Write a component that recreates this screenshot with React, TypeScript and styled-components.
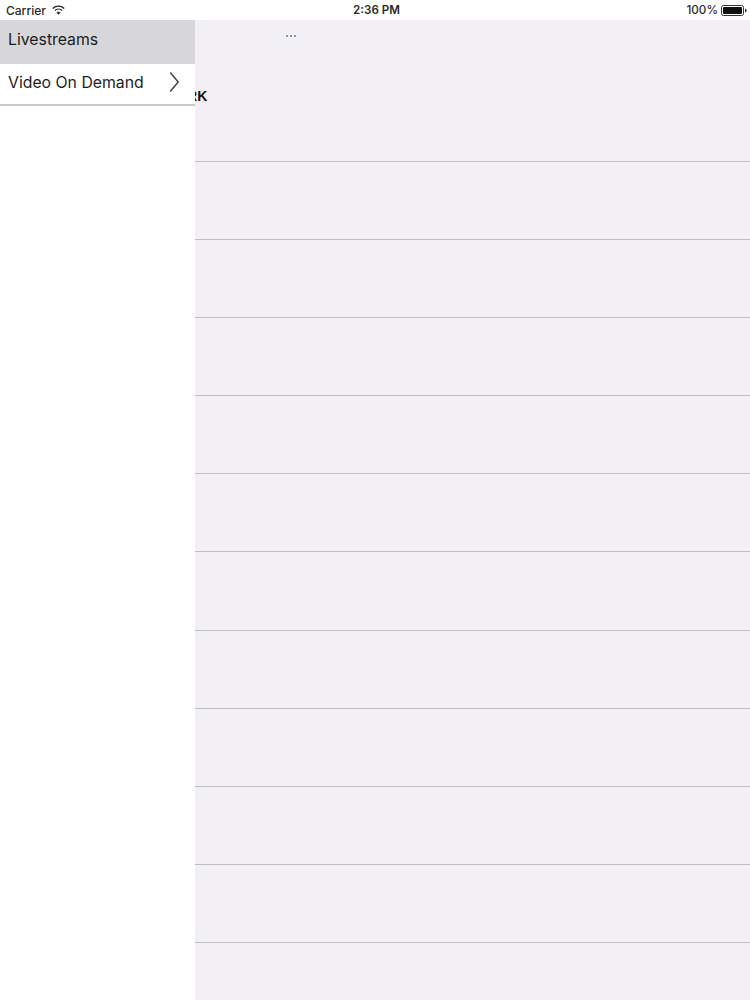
import React from "react";
import styled, { createGlobalStyle } from "styled-components";

const Global = createGlobalStyle`
  html, body { margin: 0; padding: 0; background: #fff; }
  body { font-family: "Liberation Sans", Arial, sans-serif; }
`;

const Screen = styled.div`
  position: relative;
  width: 750px;
  height: 1000px;
  overflow: hidden;
  background: #fff;
  display: flex;
  flex-direction: column;
`;

const StatusBar = styled.div`
  height: 20px;
  flex: none;
  display: grid;
  grid-template-columns: 1fr auto 1fr;
  align-items: center;
  padding: 0 3px 0 6px;
  font-family: "Inter", "Liberation Sans", sans-serif;
  font-size: 12px;
  font-weight: 500;
  color: #2a2a2a;
  background: #fff;
`;

const StatusLeft = styled.div`
  display: flex;
  align-items: center;
  gap: 6px;
`;

const StatusClock = styled.div`
  font-weight: 600;
  font-size: 11.6px;
  color: #2a2a2a;
`;

const StatusRight = styled.div`
  display: flex;
  align-items: center;
  justify-content: flex-end;
  gap: 3px;
`;

const Percent = styled.span`
  font-size: 11.7px;
`;

const Content = styled.div`
  flex: 1;
  background: #f2f0f4;
  display: flex;
  flex-direction: column;
  min-height: 0;
  overflow: hidden;
`;

const NavBar = styled.div`
  height: 36px;
  flex: none;
  display: flex;
  justify-content: flex-start;
  padding-left: 286px;
`;

const Dots = styled.div`
  display: flex;
  gap: 2px;
  margin-top: 15px;
`;

const Dot = styled.span`
  width: 2px;
  height: 2px;
  border-radius: 50%;
  background: #3f84bd;
`;

const Row = styled.div<{ $height: number }>`
  height: ${(p) => p.$height}px;
  flex: none;
  box-sizing: border-box;
  border-bottom: 1px solid #bfbec1;
`;

const Heading = styled.div`
  padding: 32px 0 0 163px;
  font-size: 14px;
  line-height: 17px;
  font-weight: 700;
  color: #111;
  white-space: nowrap;
`;

const Drawer = styled.nav`
  position: absolute;
  left: 0;
  top: 20px;
  bottom: 0;
  width: 195px;
  background: #fff;
  display: flex;
  flex-direction: column;
`;

const MenuItem = styled.div<{ $active?: boolean; $height: number }>`
  height: ${(p) => p.$height}px;
  box-sizing: border-box;
  padding: 0 15px ${(p) => (p.$active ? 6 : 4)}px 8px;
  display: flex;
  align-items: center;
  justify-content: space-between;
  font-family: "Inter", "Liberation Sans", sans-serif;
  font-size: 15.8px;
  color: #1d1d1f;
  background: ${(p) => (p.$active ? "#d7d6d9" : "#fff")};
  border-bottom: ${(p) => (p.$active ? "none" : "2px solid #cacacc")};
`;

const Wifi = () => (
  <svg width="13" height="10" viewBox="0 0 13 10" fill="none" stroke="#222">
    <path d="M0.8 3.4C4 0.4 9 0.4 12.2 3.4" strokeWidth="1.4" />
    <path d="M2.9 5.5C4.9 3.7 8.1 3.7 10.1 5.5" strokeWidth="1.4" />
    <path d="M6.5 9.4L4.7 7.5C5.7 6.7 7.3 6.7 8.3 7.5Z" fill="#222" strokeWidth="0.4" />
  </svg>
);

const Battery = () => (
  <svg width="26" height="11" viewBox="0 0 26 11">
    <rect x="0.5" y="0.5" width="22" height="10" rx="2" fill="none" stroke="#333" />
    <rect x="2" y="2" width="19" height="7" rx="1" fill="#111" />
    <path d="M24 3.6c1 .2 1.6 1 1.6 1.9s-.6 1.7-1.6 1.9z" fill="#333" />
  </svg>
);

const Chevron = () => (
  <svg width="11" height="22" viewBox="0 0 11 22" fill="none">
    <path d="M1.2 1.5L9.2 11L1.2 20.5" stroke="#4a4a4c" strokeWidth="1.6" />
  </svg>
);

const rowHeights = [106, 78.1, 78.1, 78.1, 78.1, 78.1, 78.1, 78.1, 78.1, 78.1, 78.1, 78.1, 78.1];

export default function App() {
  return (
    <Screen>
      <Global />
      <StatusBar>
        <StatusLeft>
          <span>Carrier</span>
          <Wifi />
        </StatusLeft>
        <StatusClock>2:36 PM</StatusClock>
        <StatusRight>
          <Percent>100%</Percent>
          <Battery />
        </StatusRight>
      </StatusBar>
      <Content>
        <NavBar>
          <Dots>
            <Dot />
            <Dot />
            <Dot />
          </Dots>
        </NavBar>
        {rowHeights.map((h, i) => (
          <Row key={i} $height={h}>
            {i === 0 && <Heading>WORK</Heading>}
          </Row>
        ))}
      </Content>
      <Drawer>
        <MenuItem $active $height={44}>Livestreams</MenuItem>
        <MenuItem $height={42}>
          <span>Video On Demand</span>
          <Chevron />
        </MenuItem>
      </Drawer>
    </Screen>
  );
}
